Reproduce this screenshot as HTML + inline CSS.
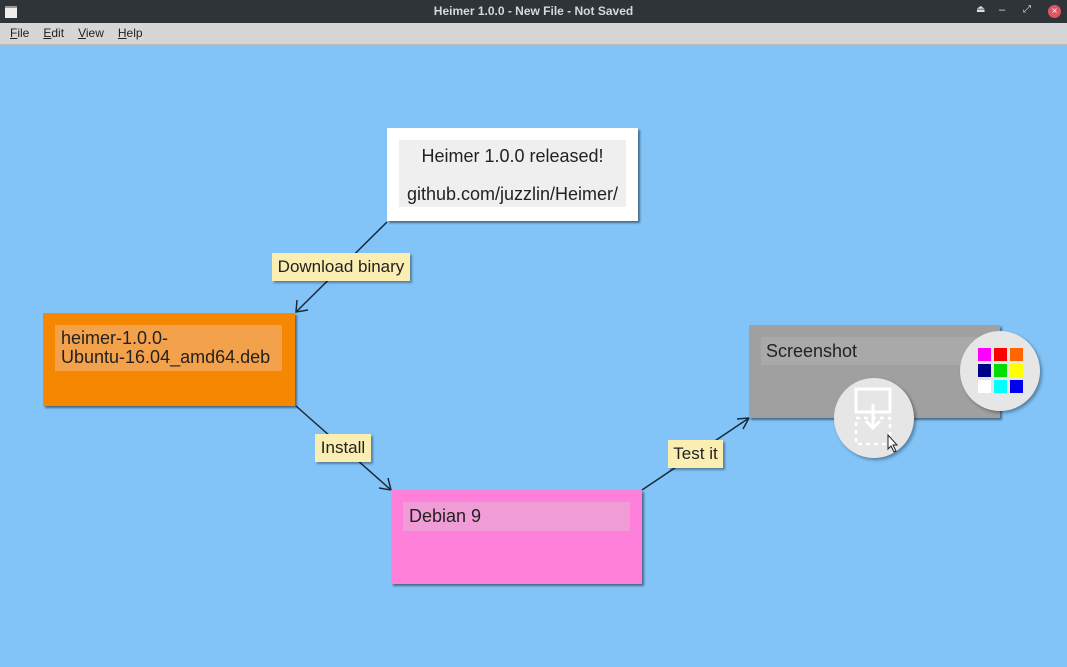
<!DOCTYPE html><html><head><style>
body{margin:0;width:1067px;height:667px;overflow:hidden;font-family:"Liberation Sans","DejaVu Sans",sans-serif;background:#82c4f8;position:relative}
.tb{position:absolute;left:0;top:0;width:1067px;height:23px;background:#2f3439;color:#d8d8d8;font-size:12px;font-weight:bold;text-align:center;line-height:23px}
.mb{position:absolute;left:0;top:23px;width:1067px;height:21px;background:#d6d6d6;font-size:12px;line-height:21px;color:#222;border-bottom:1px solid #bbb}
.mb span{margin-left:10px;margin-right:4px}
.n{position:absolute;box-shadow:2px 2px 2px rgba(0,0,0,.45)}
.in{position:absolute;font-size:18px;color:#222;white-space:nowrap}
.l{position:absolute;background:#fbeeb2;font-size:17px;color:#222;height:28px;line-height:28px;text-align:center;box-shadow:2px 2px 2px rgba(0,0,0,.35)}
.c{position:absolute;width:80px;height:80px;border-radius:50%;background:#e6e6e6;box-shadow:2px 2px 3px rgba(0,0,0,.35)}
.sq{position:absolute;width:13px;height:13px}
</style></head><body>
<div class="tb">Heimer 1.0.0 - New File - Not Saved</div>
<div style="position:absolute;left:5px;top:6px;width:12px;height:10px;background:#eee;border-top:2px solid #999"></div>
<div style="position:absolute;left:976px;top:4px;color:#ddd;font-size:10px">⏏</div>
<div style="position:absolute;left:999px;top:4px;color:#ddd;font-size:11px">–</div>
<div style="position:absolute;left:1023px;top:4px;color:#ddd;font-size:10px">⤢</div>
<div style="position:absolute;left:1048px;top:5px;width:13px;height:13px;border-radius:50%;background:#e05563;color:#fff;font-size:10px;line-height:13px;text-align:center">×</div>
<div class="mb"><span><u>F</u>ile</span><span><u>E</u>dit</span><span><u>V</u>iew</span><span><u>H</u>elp</span></div>
<svg style="position:absolute;left:0;top:0" width="1067" height="667">
<g stroke="#1a2a3a" stroke-width="1.5" fill="none">
<line x1="387" y1="222" x2="296" y2="312"/><polyline points="297,300 296,312 308,310"/>
<line x1="296" y1="406" x2="391" y2="490"/><polyline points="379,488 391,490 388,478"/>
<line x1="642" y1="490" x2="749" y2="418"/><polyline points="737,419 749,418 743,429"/>
</g></svg>
<div class="n" style="left:387px;top:128px;width:251px;height:93px;background:#fff"></div>
<div class="in" style="left:399px;top:140px;width:227px;height:66px;background:#efefef;text-align:center;line-height:30px;padding-top:1px">Heimer 1.0.0 released!<br><span style="line-height:46px">github.com/juzzlin/Heimer/</span></div>
<div class="n" style="left:43px;top:313px;width:252px;height:93px;background:#f58800"></div>
<div class="in" style="left:55px;top:325px;width:227px;height:46px;background:#f3a14a;padding-left:6px;box-sizing:border-box;line-height:19px;padding-top:4px">heimer-1.0.0-<br>Ubuntu-16.04_amd64.deb</div>
<div class="n" style="left:391px;top:490px;width:251px;height:94px;background:#ff80da"></div>
<div class="in" style="left:403px;top:502px;width:227px;height:29px;background:#f09cd6;padding-left:6px;box-sizing:border-box;line-height:29px">Debian 9</div>
<div class="n" style="left:749px;top:325px;width:251px;height:93px;background:#a0a0a0"></div>
<div class="in" style="left:761px;top:337px;width:227px;height:28px;background:#a9a9a9;padding-left:5px;box-sizing:border-box;line-height:28px">Screenshot</div>
<div class="l" style="left:272px;top:253px;width:138px">Download binary</div>
<div class="l" style="left:315px;top:434px;width:56px">Install</div>
<div class="l" style="left:668px;top:440px;width:55px">Test it</div>
<div class="c" style="left:960px;top:331px"></div>
<div class="sq" style="left:978px;top:348px;background:#f0f"></div><div class="sq" style="left:994px;top:348px;background:#f00"></div><div class="sq" style="left:1010px;top:348px;background:#f60"></div>
<div class="sq" style="left:978px;top:364px;background:#008"></div><div class="sq" style="left:994px;top:364px;background:#0d0"></div><div class="sq" style="left:1010px;top:364px;background:#ff0"></div>
<div class="sq" style="left:978px;top:380px;background:#fff"></div><div class="sq" style="left:994px;top:380px;background:#0ff"></div><div class="sq" style="left:1010px;top:380px;background:#00e"></div>
<div class="c" style="left:834px;top:378px"></div>
<svg style="position:absolute;left:834px;top:378px" width="80" height="80" fill="none" stroke="#fff" stroke-width="3">
<rect x="22" y="11" width="34" height="23"/><line x1="39" y1="26" x2="39" y2="50"/><polyline points="32,43 39,50 46,43"/>
<rect x="22" y="40" width="34" height="26" stroke-dasharray="4 4" stroke-width="2.5"/>
<path d="M54 57 l0 14 l3 -3 l3 6 l2 -1 l-3 -6 l4 0 z" fill="#fff" stroke="#222" stroke-width="1"/>
</svg>
</body></html>
